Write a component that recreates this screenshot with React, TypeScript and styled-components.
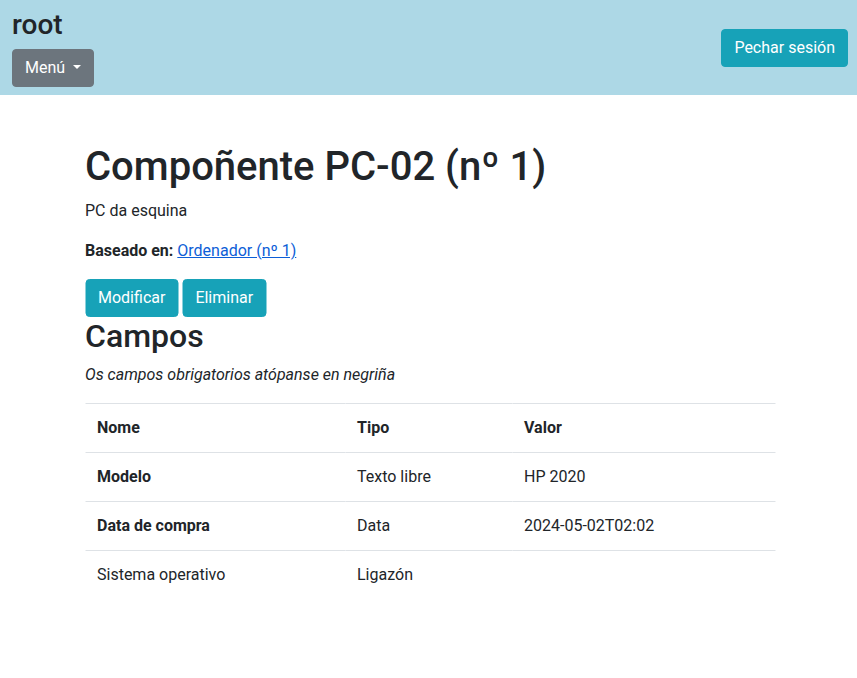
import React from "react";
import styled, { createGlobalStyle } from "styled-components";

const Global = createGlobalStyle`
  html, body { margin: 0; padding: 0; background: #fff; }
  body {
    font-family: Roboto, "Liberation Sans", Arial, sans-serif;
    font-size: 16px;
    line-height: 1.5;
    color: #212529;
  }
  * { box-sizing: border-box; }
`;

const Header = styled.header`
  background: #add8e6;
  height: 95px;
  display: flex;
  justify-content: space-between;
  align-items: center;
  padding: 8px 9px 8px 12px;
`;

const Brand = styled.div`
  display: flex;
  flex-direction: column;
  align-items: flex-start;
  gap: 7px;
`;

const Title = styled.h3`
  margin: 0;
  font-size: 28px;
  font-weight: 500;
  line-height: 1.2;
`;

const Button = styled.button<{ $variant?: "info" | "secondary" }>`
  display: inline-flex;
  align-items: center;
  font-family: inherit;
  font-size: 16px;
  line-height: 1.5;
  font-weight: 400;
  padding: 6px 12px;
  border-radius: 4px;
  border: 1px solid ${(p) => (p.$variant === "secondary" ? "#6c757d" : "#17a2b8")};
  background: ${(p) => (p.$variant === "secondary" ? "#6c757d" : "#17a2b8")};
  color: #fff;
  cursor: pointer;
`;

const Caret = styled.span`
  display: inline-block;
  margin-left: 8px;
  width: 0;
  height: 0;
  border-top: 4.5px solid #fff;
  border-left: 4.5px solid transparent;
  border-right: 4.5px solid transparent;
  transform: translateY(-1px);
`;

const Main = styled.main`
  width: 690px;
  margin: 0 auto;
  padding-top: 48px;
  transform: translateX(1.5px);
`;

const H1 = styled.h1`
  margin: 0 0 8px;
  font-size: 40px;
  font-weight: 500;
  line-height: 1.2;
`;

const H2 = styled.h2`
  margin: 0 0 8px;
  font-size: 32px;
  font-weight: 500;
  line-height: 1.2;
`;

const P = styled.p<{ $italic?: boolean }>`
  margin: 0 0 16px;
  font-style: ${(p) => (p.$italic ? "italic" : "normal")};
`;

const Link = styled.a`
  color: #0d5ed7;
  text-decoration: underline;
`;

const Actions = styled.div`
  display: flex;
  gap: 4px;
`;

const Table = styled.table`
  width: 100%;
  border-collapse: collapse;
  table-layout: fixed;
`;

const Cell = styled.td<{ $bold?: boolean; $w?: number }>`
  padding: 12px;
  border-top: 1px solid #dee2e6;
  text-align: left;
  vertical-align: top;
  font-weight: ${(p) => (p.$bold ? 700 : 400)};
  width: ${(p) => (p.$w ? `${p.$w}px` : "auto")};
`;

const rows = [
  { name: "Modelo", tipo: "Texto libre", valor: "HP 2020", req: true },
  { name: "Data de compra", tipo: "Data", valor: "2024-05-02T02:02", req: true },
  { name: "Sistema operativo", tipo: "Ligazón", valor: "", req: false },
];

export default function App() {
  return (
    <>
      <Global />
      <Header>
        <Brand>
          <Title>root</Title>
          <Button $variant="secondary">
            Menú
            <Caret />
          </Button>
        </Brand>
        <Button>Pechar sesión</Button>
      </Header>
      <Main>
        <H1>Compoñente PC-02 (nº 1)</H1>
        <P>PC da esquina</P>
        <P>
          <b>Baseado en:</b> <Link href="#">Ordenador (nº 1)</Link>
        </P>
        <Actions>
          <Button>Modificar</Button>
          <Button>Eliminar</Button>
        </Actions>
        <H2>Campos</H2>
        <P $italic>Os campos obrigatorios atópanse en negriña</P>
        <Table>
          <thead>
            <tr>
              <Cell as="th" $bold $w={260}>Nome</Cell>
              <Cell as="th" $bold $w={167}>Tipo</Cell>
              <Cell as="th" $bold>Valor</Cell>
            </tr>
          </thead>
          <tbody>
            {rows.map((r) => (
              <tr key={r.name}>
                <Cell $bold={r.req}>{r.name}</Cell>
                <Cell>{r.tipo}</Cell>
                <Cell>{r.valor}</Cell>
              </tr>
            ))}
          </tbody>
        </Table>
      </Main>
    </>
  );
}
